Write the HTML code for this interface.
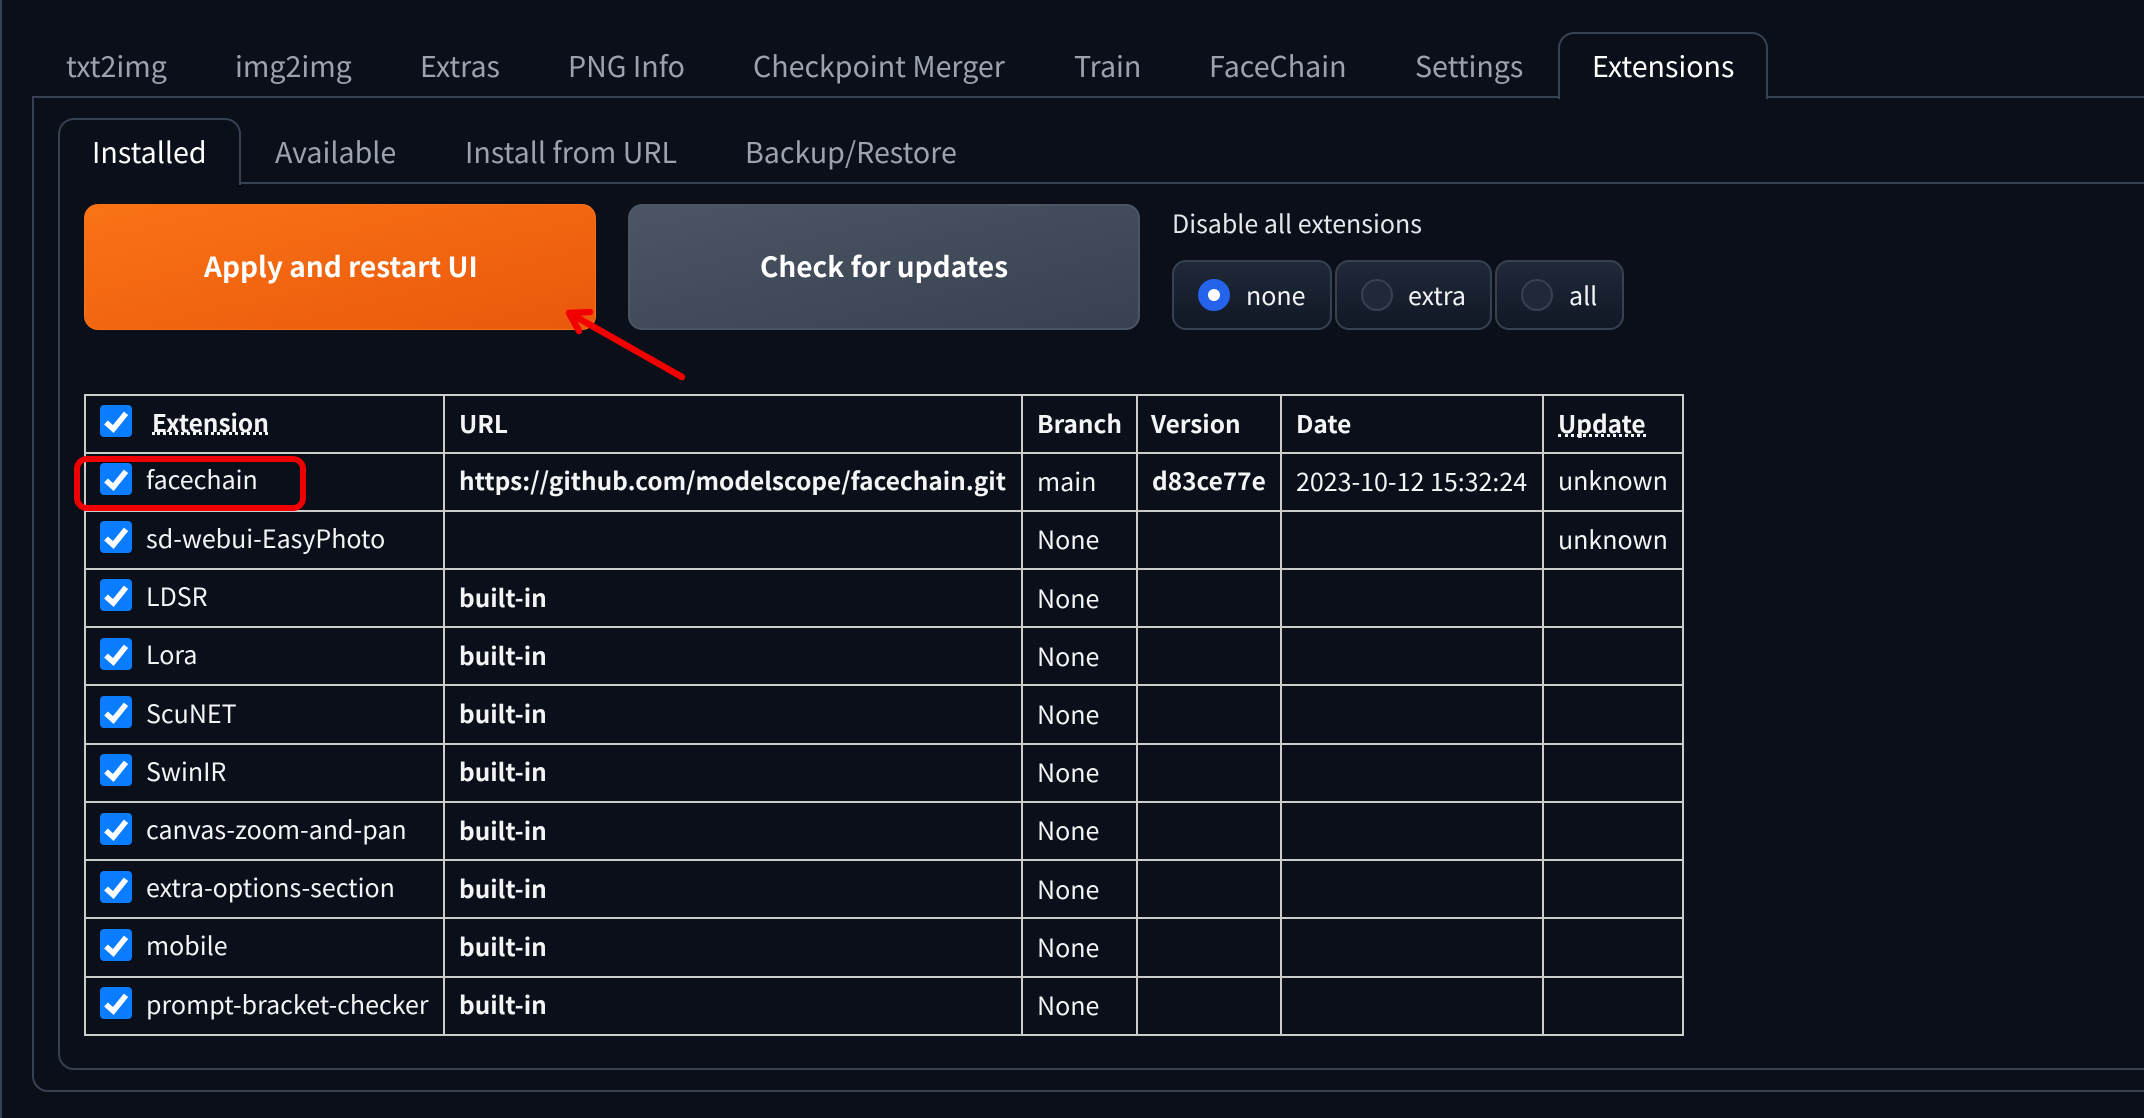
<!DOCTYPE html>
<html lang="en"><head><meta charset="utf-8"><title>Extensions</title>
<style>
html,body{margin:0;padding:0;background:#0b0f19;}
body{width:2144px;height:1118px;position:relative;overflow:hidden;font-family:"Noto Sans CJK SC","Liberation Sans",sans-serif;color:#f3f4f6;}
div,span,svg{position:absolute;box-sizing:border-box;}
.t{white-space:nowrap;height:40px;line-height:40px;font-size:25px;}
.tab{color:#9ca3af;font-size:28.6px;}
.a{color:#fff;font-size:28.6px;}
.b{font-weight:700;font-size:24.4px;}
.h{background:#ccc;height:2px;left:85px;width:1599px;}
.v{background:#ccc;width:2px;top:394px;height:642px;}
.cb{left:100px;width:32px;height:32px;background:#0a7cff;border-radius:4px;}
.cb svg{left:0;top:0;}
.rb{border:2px solid #374151;border-radius:14px;background:linear-gradient(180deg,#1f2937,#111827);height:70px;top:260px;}
.rc{width:32px;height:32px;border-radius:50%;top:279px;border:2px solid #374151;background:#1f2937;}
.u{border-bottom:3px dotted #f3f4f6;height:3px;}
</style></head><body>
<div style="left:0;top:0;width:2px;height:1118px;background:#374151"></div>

<div style="left:32px;top:96px;width:2200px;height:996px;border:2px solid #374151;border-radius:0 0 0 16px"></div>
<div style="left:1558px;top:32px;width:210px;height:67px;border:2px solid #374151;border-bottom:none;border-radius:16px 16px 0 0;background:#0b0f19"></div>
<span class="t tab" style="left:66px;top:46px">txt2img</span>
<span class="t tab" style="left:235px;top:46px">img2img</span>
<span class="t tab" style="left:420px;top:46px">Extras</span>
<span class="t tab" style="left:568px;top:46px">PNG Info</span>
<span class="t tab" style="left:753px;top:46px">Checkpoint Merger</span>
<span class="t tab" style="left:1074px;top:46px">Train</span>
<span class="t tab" style="left:1209px;top:46px">FaceChain</span>
<span class="t tab" style="left:1415px;top:46px">Settings</span>
<span class="t a" style="left:1592px;top:46px">Extensions</span>

<div style="left:58px;top:182px;width:2200px;height:888px;border:2px solid #374151;border-radius:0 0 0 16px"></div>
<div style="left:58px;top:118px;width:183px;height:67px;border:2px solid #374151;border-bottom:none;border-radius:16px 16px 0 0;background:#0b0f19"></div>
<span class="t a" style="left:92px;top:132px">Installed</span>
<span class="t tab" style="left:275px;top:132px">Available</span>
<span class="t tab" style="left:465px;top:132px">Install from URL</span>
<span class="t tab" style="left:745px;top:132px">Backup/Restore</span>

<div style="left:84px;top:204px;width:512px;height:126px;border-radius:14px;background:linear-gradient(to bottom right,#f97316,#ea580c);border:1px solid #f97316"></div>
<span class="t b" style="left:204px;top:246px;color:#fff;font-size:28px">Apply and restart UI</span>
<div style="left:628px;top:204px;width:512px;height:126px;border-radius:14px;background:linear-gradient(to bottom right,#4b5563,#374151);border:2px solid #4b5563"></div>
<span class="t b" style="left:760px;top:246px;color:#fff;font-size:28px">Check for updates</span>

<span class="t" style="left:1172px;top:203px;color:#e5e7eb">Disable all extensions</span>
<div class="rb" style="left:1172px;width:160px"></div>
<div class="rb" style="left:1335px;width:157px"></div>
<div class="rb" style="left:1495px;width:129px"></div>
<div class="rc" style="left:1198px;background:#2563eb;border-color:#2563eb"></div>
<div style="left:1208px;top:289px;width:12px;height:12px;border-radius:50%;background:#fff"></div>
<div class="rc" style="left:1361px"></div>
<div class="rc" style="left:1521px"></div>
<span class="t" style="left:1246px;top:275px">none</span>
<span class="t" style="left:1408px;top:275px">extra</span>
<span class="t" style="left:1569px;top:275px">all</span>

<!-- table lines -->
<div class="h" style="top:394px"></div><div class="h" style="top:452px"></div><div class="h" style="top:510px"></div><div class="h" style="top:568px"></div><div class="h" style="top:626px"></div><div class="h" style="top:684px"></div><div class="h" style="top:743px"></div><div class="h" style="top:801px"></div><div class="h" style="top:859px"></div><div class="h" style="top:917px"></div><div class="h" style="top:976px"></div><div class="h" style="top:1034px"></div>
<div class="v" style="left:84px"></div><div class="v" style="left:443px"></div><div class="v" style="left:1021px"></div><div class="v" style="left:1136px"></div><div class="v" style="left:1280px"></div><div class="v" style="left:1542px"></div><div class="v" style="left:1682px"></div>

<!-- checkboxes -->
<div class="cb" style="top:405px"><svg width="32" height="32"><path d="M6 17.5L13.3 24L26 8.3" fill="none" stroke="#fff" stroke-width="5.5"/></svg></div>
<div class="cb" style="top:463px"><svg width="32" height="32"><path d="M6 17.5L13.3 24L26 8.3" fill="none" stroke="#fff" stroke-width="5.5"/></svg></div>
<div class="cb" style="top:521px"><svg width="32" height="32"><path d="M6 17.5L13.3 24L26 8.3" fill="none" stroke="#fff" stroke-width="5.5"/></svg></div>
<div class="cb" style="top:579px"><svg width="32" height="32"><path d="M6 17.5L13.3 24L26 8.3" fill="none" stroke="#fff" stroke-width="5.5"/></svg></div>
<div class="cb" style="top:638px"><svg width="32" height="32"><path d="M6 17.5L13.3 24L26 8.3" fill="none" stroke="#fff" stroke-width="5.5"/></svg></div>
<div class="cb" style="top:696px"><svg width="32" height="32"><path d="M6 17.5L13.3 24L26 8.3" fill="none" stroke="#fff" stroke-width="5.5"/></svg></div>
<div class="cb" style="top:754px"><svg width="32" height="32"><path d="M6 17.5L13.3 24L26 8.3" fill="none" stroke="#fff" stroke-width="5.5"/></svg></div>
<div class="cb" style="top:813px"><svg width="32" height="32"><path d="M6 17.5L13.3 24L26 8.3" fill="none" stroke="#fff" stroke-width="5.5"/></svg></div>
<div class="cb" style="top:871px"><svg width="32" height="32"><path d="M6 17.5L13.3 24L26 8.3" fill="none" stroke="#fff" stroke-width="5.5"/></svg></div>
<div class="cb" style="top:929px"><svg width="32" height="32"><path d="M6 17.5L13.3 24L26 8.3" fill="none" stroke="#fff" stroke-width="5.5"/></svg></div>
<div class="cb" style="top:987px"><svg width="32" height="32"><path d="M6 17.5L13.3 24L26 8.3" fill="none" stroke="#fff" stroke-width="5.5"/></svg></div>

<!-- header -->
<span class="t b" style="left:152px;top:403px">Extension</span><div class="u" style="left:152px;top:432px;width:116px"></div>
<span class="t b" style="left:459px;top:404px">URL</span>
<span class="t b" style="left:1037px;top:404px">Branch</span>
<span class="t b" style="left:1151px;top:404px">Version</span>
<span class="t b" style="left:1296px;top:404px">Date</span>
<span class="t b" style="left:1558px;top:404px">Update</span><div class="u" style="left:1558px;top:434px;width:88px"></div>

<!-- col 1 -->
<span class="t" style="left:146px;top:459px">facechain</span>
<span class="t" style="left:146px;top:518px">sd-webui-EasyPhoto</span>
<span class="t" style="left:146px;top:576px">LDSR</span>
<span class="t" style="left:146px;top:634px">Lora</span>
<span class="t" style="left:146px;top:693px">ScuNET</span>
<span class="t" style="left:146px;top:751px">SwinIR</span>
<span class="t" style="left:146px;top:809px">canvas-zoom-and-pan</span>
<span class="t" style="left:146px;top:867px">extra-options-section</span>
<span class="t" style="left:146px;top:925px">mobile</span>
<span class="t" style="left:146px;top:984px">prompt-bracket-checker</span>

<!-- URL col -->
<span class="t b" style="left:459px;top:461px">https://github.com/modelscope/facechain.git</span>
<span class="t b" style="left:459px;top:578px">built-in</span>
<span class="t b" style="left:459px;top:636px">built-in</span>
<span class="t b" style="left:459px;top:694px">built-in</span>
<span class="t b" style="left:459px;top:752px">built-in</span>
<span class="t b" style="left:459px;top:811px">built-in</span>
<span class="t b" style="left:459px;top:869px">built-in</span>
<span class="t b" style="left:459px;top:927px">built-in</span>
<span class="t b" style="left:459px;top:985px">built-in</span>

<!-- branch -->
<span class="t" style="left:1037px;top:461px">main</span>
<span class="t" style="left:1037px;top:519px">None</span>
<span class="t" style="left:1037px;top:578px">None</span>
<span class="t" style="left:1037px;top:636px">None</span>
<span class="t" style="left:1037px;top:694px">None</span>
<span class="t" style="left:1037px;top:752px">None</span>
<span class="t" style="left:1037px;top:810px">None</span>
<span class="t" style="left:1037px;top:869px">None</span>
<span class="t" style="left:1037px;top:927px">None</span>
<span class="t" style="left:1037px;top:985px">None</span>

<span class="t b" style="left:1152px;top:461px">d83ce77e</span>
<span class="t" style="left:1296px;top:461px">2023-10-12 15:32:24</span>
<span class="t" style="left:1558px;top:460px">unknown</span>
<span class="t" style="left:1558px;top:519px">unknown</span>

<!-- annotations -->
<svg style="left:0;top:0" width="2144" height="1118" viewBox="0 0 2144 1118">
<rect x="77" y="459" width="226" height="49" rx="10" fill="none" stroke="#ee0000" stroke-width="6"/>
<path d="M682 377L571 314M590 312L569 313L579 331" fill="none" stroke="#f20000" stroke-width="6.5" stroke-linecap="round" stroke-linejoin="round"/>
</svg>
</body></html>
